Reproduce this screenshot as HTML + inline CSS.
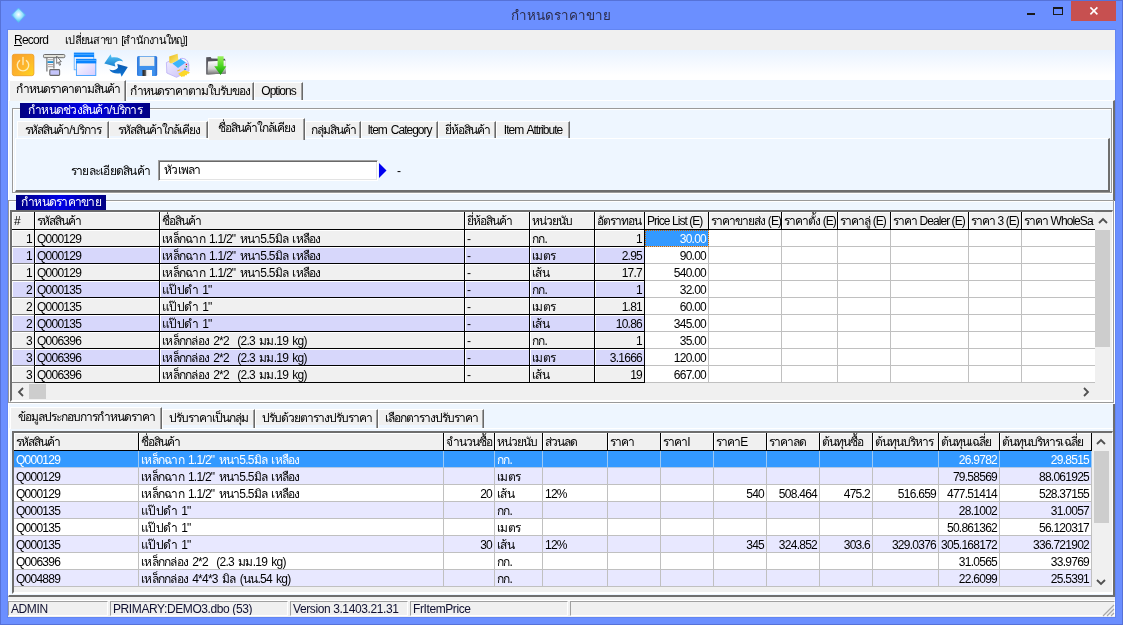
<!DOCTYPE html><html lang="th"><head><meta charset="utf-8"><title>กำหนดราคาขาย</title>
<style>
*{box-sizing:border-box;margin:0;padding:0}
html,body{width:1123px;height:625px;overflow:hidden}
body{position:relative;background:#6b8fff;font-family:"Liberation Sans",sans-serif;font-size:12px;color:#000;letter-spacing:-0.75px;word-spacing:1.6px}
div,span{position:absolute;white-space:pre;overflow:hidden}
.t{line-height:14px;height:15px}
.edge{left:0;top:0;width:1123px;height:625px;border:1px solid #5672d8;overflow:visible}
.title{left:361px;top:5px;width:400px;height:22px;text-align:center;font-size:13.4px;line-height:21px;color:#2c2c4c;letter-spacing:0}
.client{left:7px;top:29px;width:1109px;height:589px;background:#eef6ff;border:1px solid #6285f2}
.menu{left:8px;top:30px;width:1107px;height:20px;background:#f0f0f0;font-size:12px}
.menu span{top:2px;height:17px;line-height:16px}
.tool{left:8px;top:50px;width:1107px;height:30px;background:linear-gradient(#eaf3ff,#ffffff 85%)}
.tab{background:linear-gradient(#f0f0f0,#f0f0f0) no-repeat 0 0/100% 14px;border-right:1px solid #696969;box-shadow:inset -1px 0 0 #a0a0a0;border-left:1px solid #fff;border-top:1px solid #fff;text-align:center;line-height:16px;letter-spacing:-1px}
.tab.on{background:#f0f0f0;z-index:3}

.navy{background:linear-gradient(90deg,#000082 0%,#0000e6 50%,#000082 100%);color:#fff;text-align:center;line-height:14px;height:15px;z-index:4}
.hd{letter-spacing:-0.95px;word-spacing:0;background:#f0f0f0;border-right:1px solid #000;border-bottom:1px solid #000;height:18px;line-height:18px;padding-left:2px;box-shadow:inset 1px 1px 0 #fff}
.fx{border-right:1px solid #000;border-bottom:1px solid #000;height:17px;line-height:19px;padding-left:2px;box-shadow:inset 1px 1px 0 #fff}
.c{border-right:1px solid #c0c0c0;border-bottom:1px solid #c0c0c0;height:17px;line-height:19px;padding-left:2px;background:#fff}
.r{text-align:right;padding-right:2px;padding-left:0}
.sb{background:#f0f0f0}
.thumb{background:#cdcdcd}
.st{top:601px;height:15px;border-left:1px solid #a0a0a0;border-top:1px solid #a0a0a0;border-right:1px solid #fff;border-bottom:1px solid #fff;font-size:12px;line-height:13px;padding-top:1px;padding-left:2px;letter-spacing:-0.4px;word-spacing:0;color:#101030}
i{font-style:normal;display:inline-block;overflow:hidden;vertical-align:top;white-space:pre;height:100%}
</style></head>
<body>
<div id="wrap" style="left:0;top:0;width:1123px;height:625px;will-change:transform;overflow:visible">
<div class="edge"></div>
<svg style="position:absolute;left:10px;top:7px" width="17" height="17" viewBox="0 0 17 17"><defs><radialGradient id="dg" cx="50%" cy="45%" r="55%"><stop offset="0" stop-color="#ffffff"></stop><stop offset="0.5" stop-color="#9fe6ff"></stop><stop offset="1" stop-color="#3fb4f0"></stop></radialGradient></defs><path d="M8.5 1 L15.5 8 L8.5 15.5 L1.5 8 Z" fill="url(#dg)" stroke="#58b8f0" stroke-width="0.8"></path></svg>
<div class="title"><i style="width: 101px;">กำหนดราคาขาย</i></div>
<div style="left:1027px;top:13px;width:8px;height:2px;background:#1a1a1a"></div>
<div style="left:1053px;top:7px;width:10px;height:8px;border:1px solid #1a1a1a;border-top-width:2px"></div>
<div style="left:1071px;top:1px;width:45px;height:20px;background:#c75050"></div>
<svg style="position:absolute;left:1089px;top:6px;z-index:5" width="10" height="10" viewBox="0 0 10 10"><path d="M1.4 1.4 L8.4 8.4 M8.4 1.4 L1.4 8.4" stroke="#fff" stroke-width="1.6" fill="none"></path></svg>
<div class="client"></div>
<div class="menu"><span style="left:6px;width:40px"><u>R</u>ecord</span><span style="left:57px;width:140px;font-size:11px"><i style="width: 124px;">เปลี่ยนสาขา [สำนักงานใหญ่]</i></span></div>
<div class="tool"></div>
<svg style="position:absolute;left:8px;top:50px;z-index:6" width="230" height="30" viewBox="8 50 230 30">
<defs>
<linearGradient id="gPow" x1="0" y1="0" x2="1" y2="1"><stop offset="0" stop-color="#f8a02c"></stop><stop offset="0.55" stop-color="#fdb52c"></stop><stop offset="1" stop-color="#ffd81c"></stop></linearGradient>
<linearGradient id="gWin" x1="0" y1="0" x2="1" y2="1"><stop offset="0" stop-color="#ffffff"></stop><stop offset="1" stop-color="#d6ccff"></stop></linearGradient>
<linearGradient id="gArA" x1="0" y1="0" x2="0" y2="1"><stop offset="0" stop-color="#58c8f8"></stop><stop offset="1" stop-color="#1880d0"></stop></linearGradient>
<linearGradient id="gArB" x1="0" y1="0" x2="0" y2="1"><stop offset="0" stop-color="#0858b0"></stop><stop offset="1" stop-color="#1078d8"></stop></linearGradient>
<linearGradient id="gSav" x1="0" y1="0" x2="1" y2="0"><stop offset="0" stop-color="#2f78dc"></stop><stop offset="0.15" stop-color="#3f92ee"></stop><stop offset="0.85" stop-color="#3f92ee"></stop><stop offset="1" stop-color="#2a6cd0"></stop></linearGradient>
<linearGradient id="gSh" x1="0" y1="0" x2="1" y2="0"><stop offset="0" stop-color="#202020"></stop><stop offset="0.3" stop-color="#505050"></stop><stop offset="0.45" stop-color="#f4f4f4"></stop><stop offset="1" stop-color="#ffffff"></stop></linearGradient>
<linearGradient id="gFol" x1="0" y1="0" x2="0" y2="1"><stop offset="0" stop-color="#ffffff"></stop><stop offset="0.6" stop-color="#d0d0d0"></stop><stop offset="1" stop-color="#707070"></stop></linearGradient>
<linearGradient id="gGrn" x1="0" y1="0" x2="0" y2="1"><stop offset="0" stop-color="#9cf060"></stop><stop offset="0.5" stop-color="#4cd820"></stop><stop offset="1" stop-color="#189810"></stop></linearGradient>
<linearGradient id="gYel" x1="0" y1="0" x2="1" y2="1"><stop offset="0" stop-color="#e8b820"></stop><stop offset="1" stop-color="#fff078"></stop></linearGradient>
<linearGradient id="gPrn" x1="0" y1="0" x2="1" y2="1"><stop offset="0" stop-color="#f0ecff"></stop><stop offset="1" stop-color="#c8c0f8"></stop></linearGradient>
</defs>
<!-- 1 power -->
<rect x="12.3" y="54.3" width="21.6" height="21.4" rx="2.2" fill="url(#gPow)" stroke="#ee9a20" stroke-width="0.8"></rect>
<path d="M19.6 60.6 A5.7 5.7 0 1 0 26.4 60.6" fill="none" stroke="#fff3c4" stroke-width="1.4" stroke-linecap="round" opacity="0.9"></path>
<path d="M23 57.4 V64.6" stroke="#fff3c4" stroke-width="1.4" stroke-linecap="round" opacity="0.9"></path>
<!-- 2 customize toolbar -->
<rect x="43.5" y="54.5" width="21.3" height="3.2" rx="1" fill="#e4e4dc" stroke="#6c6c6c" stroke-width="1"></rect>
<rect x="46.9" y="58" width="7" height="13" fill="#fbfbfb"></rect>
<path d="M46.9 57.8 V71.6 M53.9 57.8 V68.5" stroke="#686868" stroke-width="1.1" fill="none"></path>
<path d="M48 59.6 H53" stroke="#b8b8b8" stroke-width="1.4"></path>
<path d="M47.5 62.1 H53.3" stroke="#1f8fd0" stroke-width="1.9"></path>
<path d="M48 64.6 H53" stroke="#b09090" stroke-width="1"></path>
<path d="M48 66.7 H53" stroke="#a0a0a0" stroke-width="1"></path>
<rect x="49.8" y="69.6" width="9.8" height="5.8" rx="0.8" fill="#c4c4fa" stroke="#686868" stroke-width="1.1"></rect>
<path d="M56.7 56.2 V63.6 L58.3 62.2 L59.5 65.3 L60.6 64.8 L59.4 61.8 L61.3 61.6 Z" fill="#fff" stroke="#404040" stroke-width="0.7"></path>
<!-- 3 windows -->
<rect x="74.2" y="53" width="19.6" height="16.8" fill="#f2f4ff" stroke="#55aaff" stroke-width="0.8"></rect>
<rect x="74" y="52.8" width="20" height="4.3" fill="#0a84ff"></rect>
<path d="M74 54.4 H94" stroke="#58b0ff" stroke-width="0.8"></path>
<rect x="76.4" y="59.2" width="19.4" height="16.3" fill="url(#gWin)" stroke="#3fa0ff" stroke-width="0.9"></rect>
<rect x="76" y="59" width="20.2" height="4.4" fill="#0a84ff"></rect>
<path d="M76 60.5 H96.2" stroke="#58b0ff" stroke-width="0.8"></path>
<!-- 4 refresh -->
<path d="M104.3 63.4 L110.6 54.2 L111.6 57.6 C117 56.6 121.5 58.4 123.2 61.4 C119.5 59.8 116.5 61 114.6 63.4 L115.4 66.6 Z" fill="url(#gArA)"></path>
<path d="M127.8 66.9 L121.6 76.8 L120.4 73.2 C115.5 74.2 111 72.6 109.3 69.5 C113 71 116.3 70 118 67.4 L117.3 64 Z" fill="url(#gArB)"></path>
<!-- 5 save -->
<rect x="137" y="56" width="20.2" height="20" rx="1.6" fill="url(#gSav)"></rect>
<rect x="140" y="57" width="14" height="8.7" fill="#eeeeee" stroke="#f6f2e8" stroke-width="0.6"></rect>
<rect x="142.5" y="70" width="9.5" height="6" fill="url(#gSh)"></rect>
<!-- 6 printer -->
<path d="M166.4 62.5 L175 58.6 L188.6 64 L189 71 L176.5 77.3 L166.8 73 Z" fill="url(#gPrn)" stroke="#b4a8f4" stroke-width="0.7"></path>
<path d="M169.2 56.4 L177.6 53.8 L178.4 60.4 L171 63.6 L169.3 62.4 Z" fill="url(#gYel)"></path>
<path d="M172.4 63.4 L180.6 58.8 L185.8 62.6 L178 67.9 Z" fill="#3cb4fc"></path>
<path d="M180 58.6 C185 57.4 188.6 60.6 188.8 66" fill="none" stroke="#b8acf8" stroke-width="0.9"></path>
<rect x="185.8" y="63.9" width="1.2" height="1.2" fill="#f01818"></rect>
<rect x="185.8" y="66" width="1.2" height="1.2" fill="#28b028"></rect>
<rect x="184.2" y="68.6" width="2" height="1.4" fill="#1c88f0"></rect>
<path d="M177.2 70.4 L180.2 69.2 L180.4 70.2 L177.6 71.4 Z" fill="#f0c020"></path>
<path d="M178.2 73.8 L184.5 70 L190 72.4 L188.6 73.8 L187.6 73.4 L186.4 75.4 L185.4 75 L184.2 76.8 L183 76.2 L181.6 77 Z" fill="#fcd828"></path>
<!-- 7 folder + arrow -->
<path d="M206.2 57.2 L210.6 57 L211.6 58.6 L224.8 58.8 L225.6 60.4 V73.6 L206.2 74.6 Z" fill="#54545c"></path>
<path d="M208 61.4 L225.8 60.6 L226 73.4 L207.4 74.4 Z" fill="url(#gFol)"></path>
<path d="M217.6 56.2 H223.6 V66.2 H226.3 L220.6 75 L214.2 66.2 H217.6 Z" fill="url(#gGrn)"></path>
</svg>

<div style="left:8px;top:100px;width:1107px;height:497px;border-top:1px solid #fff;border-left:1px solid #fff;border-right:2px solid #6e6e6e;border-bottom:2px solid #6e6e6e"></div>
<div class="tab on" style="left:9px;top:80px;width:117px;height:21px;line-height:17px"><i style="width: 105px;">กำหนดราคาตามสินค้า</i></div>
<div class="tab" style="left:126px;top:82px;width:128px;height:18px;line-height:16px"><i style="width: 121px;">กำหนดราคาตามใบรับของ</i></div>
<div class="tab" style="left:254px;top:82px;width:49px;height:18px;line-height:16px">Options</div>
<div style="left:12px;top:108px;width:1100px;height:85px;border:1px solid #9a9a9a;box-shadow:inset 1px 1px 0 #fff, 1px 1px 0 #fff"></div>
<div class="navy" style="left:20px;top:103px;width:130px"><i style="width: 115px;">กำหนดช่วงสินค้า/บริการ</i></div>
<div style="left:15px;top:138px;width:1095px;height:54px;border-top:1px solid #fff;border-left:1px solid #fff;border-right:2px solid #6e6e6e;border-bottom:2px solid #6e6e6e"></div>
<div class="tab" style="left:17px;top:121px;width:92px;height:17px;line-height:16px"><i style="width: 77px;">รหัสสินค้า/บริการ</i></div>
<div class="tab" style="left:109px;top:121px;width:99px;height:17px;line-height:16px"><i style="width: 83px;">รหัสสินค้าใกล้เคียง</i></div>
<div class="tab on" style="left:208px;top:118px;width:97px;height:22px;line-height:18px"><i style="width: 78px;">ชื่อสินค้าใกล้เคียง</i></div>
<div class="tab" style="left:305px;top:121px;width:56px;height:17px;line-height:16px"><i style="width: 46px;">กลุ่มสินค้า</i></div>
<div class="tab" style="left:361px;top:121px;width:77px;height:17px;line-height:16px">Item Category</div>
<div class="tab" style="left:438px;top:121px;width:58px;height:17px;line-height:16px"><i style="width: 46px;">ยี่ห้อสินค้า</i></div>
<div class="tab" style="left:496px;top:121px;width:74px;height:17px;line-height:16px">Item Attribute</div>
<div class="t" style="left:60px;top:164px;width:90px;text-align:right"><i style="width: 81px;">รายละเอียดสินค้า</i></div>
<div style="left:158px;top:160px;width:220px;height:21px;background:#fff;border:1px solid;border-color:#a0a0a0 #fff #fff #a0a0a0;box-shadow:inset 1px 1px 0 #696969,inset -1px -1px 0 #e3e3e3;line-height:19px;padding-left:5px"><i style="width: 38px;">หัวเพลา</i></div>
<svg style="position:absolute;left:379px;top:163px" width="8" height="15" viewBox="0 0 8 15"><path d="M0 0 L7.5 7.5 L0 15 Z" fill="#0000f0"></path></svg>
<div class="t" style="left:397px;top:164px;width:8px">-</div>
<div style="left:9px;top:201px;width:1106px;height:203px;border:1px solid #fff"></div>
<div style="left:8px;top:200px;width:1106px;height:203px;border:1px solid #9a9a9a"></div>
<div class="navy" style="left:16px;top:195px;width:90px"><i style="width: 81px;">กำหนดราคาขาย</i></div>
<div style="left:10px;top:210px;width:1103px;height:192px;background:#f0f0f0;border-top:2px solid #6e6e6e;border-left:2px solid #6e6e6e;border-right:1px solid #fff;border-bottom:2px solid #fff"></div>
<div class="hd" style="left:12px;top:212px;width:23px">#</div>
<div class="hd" style="left:35px;top:212px;width:125px"><i style="width: 46px;">รหัสสินค้า</i></div>
<div class="hd" style="left:160px;top:212px;width:305px"><i style="width: 41px;">ชื่อสินค้า</i></div>
<div class="hd" style="left:465px;top:212px;width:65px"><i style="width: 47px;">ยี่ห้อสินค้า</i></div>
<div class="hd" style="left:530px;top:212px;width:65px"><i style="width: 42px;">หน่วยนับ</i></div>
<div class="hd" style="left:595px;top:212px;width:50px"><i style="width: 46px;">อัตราทอน</i></div>
<div class="hd" style="left:645px;top:212px;width:64px">Price List (E)</div>
<div class="hd" style="left:709px;top:212px;width:73px"><i style="width: 71px;">ราคาขายส่ง (E)</i></div>
<div class="hd" style="left:782px;top:212px;width:56px"><i style="width: 53px;">ราคาตั้ง (E)</i></div>
<div class="hd" style="left:838px;top:212px;width:53px"><i style="width: 47px;">ราคาลู่ (E)</i></div>
<div class="hd" style="left:891px;top:212px;width:78px"><i style="width: 73px;">ราคา Dealer (E)</i></div>
<div class="hd" style="left:969px;top:212px;width:53px"><i style="width: 49px;">ราคา 3 (E)</i></div>
<div class="hd" style="left:1022px;top:212px;width:73px;border-right:none"><i style="width: 70px;">ราคา WholeSa</i></div>
<div class="fx r" style="left:12px;top:230px;width:23px;background:#f0f0f0;border-bottom-color:#808080">1</div>
<div class="fx" style="left:35px;top:230px;width:125px;background:#f0f0f0">Q000129</div>
<div class="fx" style="left:160px;top:230px;width:305px;background:#f0f0f0"><i style="width: 160px;">เหล็กฉาก 1.1/2" หนา5.5มิล เหลือง</i></div>
<div class="fx" style="left:465px;top:230px;width:65px;background:#f0f0f0">-</div>
<div class="fx" style="left:530px;top:230px;width:65px;background:#f0f0f0"><i style="width: 17px;">กก.</i></div>
<div class="fx r" style="left:595px;top:230px;width:50px;background:#f0f0f0">1</div>
<div class="c r" style="left:645px;top:230px;width:64px;background:#3399ff;color:#fff;outline:1px dotted #c86400;outline-offset:-1px">30.00</div>
<div class="c r" style="left:709px;top:230px;width:73px"></div>
<div class="c r" style="left:782px;top:230px;width:56px"></div>
<div class="c r" style="left:838px;top:230px;width:53px"></div>
<div class="c r" style="left:891px;top:230px;width:78px"></div>
<div class="c r" style="left:969px;top:230px;width:53px"></div>
<div class="c r" style="left:1022px;top:230px;width:73px;border-right:none"></div>
<div class="fx r" style="left:12px;top:247px;width:23px;background:#d7d7fb;border-bottom-color:#808080">1</div>
<div class="fx" style="left:35px;top:247px;width:125px;background:#d7d7fb">Q000129</div>
<div class="fx" style="left:160px;top:247px;width:305px;background:#d7d7fb"><i style="width: 160px;">เหล็กฉาก 1.1/2" หนา5.5มิล เหลือง</i></div>
<div class="fx" style="left:465px;top:247px;width:65px;background:#d7d7fb">-</div>
<div class="fx" style="left:530px;top:247px;width:65px;background:#d7d7fb"><i style="width: 24px;">เมตร</i></div>
<div class="fx r" style="left:595px;top:247px;width:50px;background:#d7d7fb">2.95</div>
<div class="c r" style="left:645px;top:247px;width:64px">90.00</div>
<div class="c r" style="left:709px;top:247px;width:73px"></div>
<div class="c r" style="left:782px;top:247px;width:56px"></div>
<div class="c r" style="left:838px;top:247px;width:53px"></div>
<div class="c r" style="left:891px;top:247px;width:78px"></div>
<div class="c r" style="left:969px;top:247px;width:53px"></div>
<div class="c r" style="left:1022px;top:247px;width:73px;border-right:none"></div>
<div class="fx r" style="left:12px;top:264px;width:23px;background:#f0f0f0;border-bottom-color:#808080">1</div>
<div class="fx" style="left:35px;top:264px;width:125px;background:#f0f0f0">Q000129</div>
<div class="fx" style="left:160px;top:264px;width:305px;background:#f0f0f0"><i style="width: 160px;">เหล็กฉาก 1.1/2" หนา5.5มิล เหลือง</i></div>
<div class="fx" style="left:465px;top:264px;width:65px;background:#f0f0f0">-</div>
<div class="fx" style="left:530px;top:264px;width:65px;background:#f0f0f0"><i style="width: 18px;">เส้น</i></div>
<div class="fx r" style="left:595px;top:264px;width:50px;background:#f0f0f0">17.7</div>
<div class="c r" style="left:645px;top:264px;width:64px">540.00</div>
<div class="c r" style="left:709px;top:264px;width:73px"></div>
<div class="c r" style="left:782px;top:264px;width:56px"></div>
<div class="c r" style="left:838px;top:264px;width:53px"></div>
<div class="c r" style="left:891px;top:264px;width:78px"></div>
<div class="c r" style="left:969px;top:264px;width:53px"></div>
<div class="c r" style="left:1022px;top:264px;width:73px;border-right:none"></div>
<div class="fx r" style="left:12px;top:281px;width:23px;background:#d7d7fb;border-bottom-color:#808080">2</div>
<div class="fx" style="left:35px;top:281px;width:125px;background:#d7d7fb">Q000135</div>
<div class="fx" style="left:160px;top:281px;width:305px;background:#d7d7fb"><i style="width: 51px;">แป๊ปดำ 1"</i></div>
<div class="fx" style="left:465px;top:281px;width:65px;background:#d7d7fb">-</div>
<div class="fx" style="left:530px;top:281px;width:65px;background:#d7d7fb"><i style="width: 17px;">กก.</i></div>
<div class="fx r" style="left:595px;top:281px;width:50px;background:#d7d7fb">1</div>
<div class="c r" style="left:645px;top:281px;width:64px">32.00</div>
<div class="c r" style="left:709px;top:281px;width:73px"></div>
<div class="c r" style="left:782px;top:281px;width:56px"></div>
<div class="c r" style="left:838px;top:281px;width:53px"></div>
<div class="c r" style="left:891px;top:281px;width:78px"></div>
<div class="c r" style="left:969px;top:281px;width:53px"></div>
<div class="c r" style="left:1022px;top:281px;width:73px;border-right:none"></div>
<div class="fx r" style="left:12px;top:298px;width:23px;background:#f0f0f0;border-bottom-color:#808080">2</div>
<div class="fx" style="left:35px;top:298px;width:125px;background:#f0f0f0">Q000135</div>
<div class="fx" style="left:160px;top:298px;width:305px;background:#f0f0f0"><i style="width: 51px;">แป๊ปดำ 1"</i></div>
<div class="fx" style="left:465px;top:298px;width:65px;background:#f0f0f0">-</div>
<div class="fx" style="left:530px;top:298px;width:65px;background:#f0f0f0"><i style="width: 24px;">เมตร</i></div>
<div class="fx r" style="left:595px;top:298px;width:50px;background:#f0f0f0">1.81</div>
<div class="c r" style="left:645px;top:298px;width:64px">60.00</div>
<div class="c r" style="left:709px;top:298px;width:73px"></div>
<div class="c r" style="left:782px;top:298px;width:56px"></div>
<div class="c r" style="left:838px;top:298px;width:53px"></div>
<div class="c r" style="left:891px;top:298px;width:78px"></div>
<div class="c r" style="left:969px;top:298px;width:53px"></div>
<div class="c r" style="left:1022px;top:298px;width:73px;border-right:none"></div>
<div class="fx r" style="left:12px;top:315px;width:23px;background:#d7d7fb;border-bottom-color:#808080">2</div>
<div class="fx" style="left:35px;top:315px;width:125px;background:#d7d7fb">Q000135</div>
<div class="fx" style="left:160px;top:315px;width:305px;background:#d7d7fb"><i style="width: 51px;">แป๊ปดำ 1"</i></div>
<div class="fx" style="left:465px;top:315px;width:65px;background:#d7d7fb">-</div>
<div class="fx" style="left:530px;top:315px;width:65px;background:#d7d7fb"><i style="width: 18px;">เส้น</i></div>
<div class="fx r" style="left:595px;top:315px;width:50px;background:#d7d7fb">10.86</div>
<div class="c r" style="left:645px;top:315px;width:64px">345.00</div>
<div class="c r" style="left:709px;top:315px;width:73px"></div>
<div class="c r" style="left:782px;top:315px;width:56px"></div>
<div class="c r" style="left:838px;top:315px;width:53px"></div>
<div class="c r" style="left:891px;top:315px;width:78px"></div>
<div class="c r" style="left:969px;top:315px;width:53px"></div>
<div class="c r" style="left:1022px;top:315px;width:73px;border-right:none"></div>
<div class="fx r" style="left:12px;top:332px;width:23px;background:#f0f0f0;border-bottom-color:#808080">3</div>
<div class="fx" style="left:35px;top:332px;width:125px;background:#f0f0f0">Q006396</div>
<div class="fx" style="left:160px;top:332px;width:305px;background:#f0f0f0"><i style="width: 146px;">เหล็กกล่อง 2*2  (2.3 มม.19 kg)</i></div>
<div class="fx" style="left:465px;top:332px;width:65px;background:#f0f0f0">-</div>
<div class="fx" style="left:530px;top:332px;width:65px;background:#f0f0f0"><i style="width: 17px;">กก.</i></div>
<div class="fx r" style="left:595px;top:332px;width:50px;background:#f0f0f0">1</div>
<div class="c r" style="left:645px;top:332px;width:64px">35.00</div>
<div class="c r" style="left:709px;top:332px;width:73px"></div>
<div class="c r" style="left:782px;top:332px;width:56px"></div>
<div class="c r" style="left:838px;top:332px;width:53px"></div>
<div class="c r" style="left:891px;top:332px;width:78px"></div>
<div class="c r" style="left:969px;top:332px;width:53px"></div>
<div class="c r" style="left:1022px;top:332px;width:73px;border-right:none"></div>
<div class="fx r" style="left:12px;top:349px;width:23px;background:#d7d7fb;border-bottom-color:#808080">3</div>
<div class="fx" style="left:35px;top:349px;width:125px;background:#d7d7fb">Q006396</div>
<div class="fx" style="left:160px;top:349px;width:305px;background:#d7d7fb"><i style="width: 146px;">เหล็กกล่อง 2*2  (2.3 มม.19 kg)</i></div>
<div class="fx" style="left:465px;top:349px;width:65px;background:#d7d7fb">-</div>
<div class="fx" style="left:530px;top:349px;width:65px;background:#d7d7fb"><i style="width: 24px;">เมตร</i></div>
<div class="fx r" style="left:595px;top:349px;width:50px;background:#d7d7fb">3.1666</div>
<div class="c r" style="left:645px;top:349px;width:64px">120.00</div>
<div class="c r" style="left:709px;top:349px;width:73px"></div>
<div class="c r" style="left:782px;top:349px;width:56px"></div>
<div class="c r" style="left:838px;top:349px;width:53px"></div>
<div class="c r" style="left:891px;top:349px;width:78px"></div>
<div class="c r" style="left:969px;top:349px;width:53px"></div>
<div class="c r" style="left:1022px;top:349px;width:73px;border-right:none"></div>
<div class="fx r" style="left:12px;top:366px;width:23px;background:#f0f0f0;border-bottom-color:#808080">3</div>
<div class="fx" style="left:35px;top:366px;width:125px;background:#f0f0f0">Q006396</div>
<div class="fx" style="left:160px;top:366px;width:305px;background:#f0f0f0"><i style="width: 146px;">เหล็กกล่อง 2*2  (2.3 มม.19 kg)</i></div>
<div class="fx" style="left:465px;top:366px;width:65px;background:#f0f0f0">-</div>
<div class="fx" style="left:530px;top:366px;width:65px;background:#f0f0f0"><i style="width: 18px;">เส้น</i></div>
<div class="fx r" style="left:595px;top:366px;width:50px;background:#f0f0f0">19</div>
<div class="c r" style="left:645px;top:366px;width:64px">667.00</div>
<div class="c r" style="left:709px;top:366px;width:73px"></div>
<div class="c r" style="left:782px;top:366px;width:56px"></div>
<div class="c r" style="left:838px;top:366px;width:53px"></div>
<div class="c r" style="left:891px;top:366px;width:78px"></div>
<div class="c r" style="left:969px;top:366px;width:53px"></div>
<div class="c r" style="left:1022px;top:366px;width:73px;border-right:none"></div>
<div class="sb" style="left:1095px;top:212px;width:17px;height:171px"></div>
<div class="thumb" style="left:1095px;top:230px;width:15px;height:117px"></div>
<svg style="position:absolute;left:1098px;top:217px" width="10" height="7" viewBox="0 0 10 7"><path d="M1 6 L5 2 L9 6" stroke="#505050" stroke-width="1.8" fill="none"></path></svg>
<div class="sb" style="left:12px;top:383px;width:1100px;height:17px"></div>
<div class="thumb" style="left:29px;top:384px;width:17px;height:15px"></div>
<svg style="position:absolute;left:17px;top:387px" width="7" height="10" viewBox="0 0 7 10"><path d="M6 1 L2 5 L6 9" stroke="#505050" stroke-width="1.8" fill="none"></path></svg>
<svg style="position:absolute;left:1083px;top:387px" width="7" height="10" viewBox="0 0 7 10"><path d="M1 1 L5 5 L1 9" stroke="#505050" stroke-width="1.8" fill="none"></path></svg>
<div style="left:9px;top:428px;width:1104px;height:167px;border-top:1px solid #fff;border-left:1px solid #fff"></div>
<div class="tab on" style="left:10px;top:407px;width:152px;height:22px;line-height:19px"><i style="width: 138px;">ข้อมูลประกอบการกำหนดราคา</i></div>
<div class="tab" style="left:162px;top:409px;width:93px;height:19px;line-height:17px;background-size:100% 15px"><i style="width: 80px;">ปรับราคาเป็นกลุ่ม</i></div>
<div class="tab" style="left:255px;top:409px;width:123px;height:19px;line-height:17px;background-size:100% 15px"><i style="width: 111px;">ปรับด้วยตารางปรับราคา</i></div>
<div class="tab" style="left:378px;top:409px;width:106px;height:19px;line-height:17px;background-size:100% 15px"><i style="width: 94px;">เลือกตารางปรับราคา</i></div>
<div style="left:12px;top:431px;width:1101px;height:163px;background:#f0f0f0;border-top:2px solid #6e6e6e;border-left:2px solid #6e6e6e;border-right:1px solid #fff;border-bottom:2px solid #fff"></div>
<div class="hd" style="left:14px;top:433px;width:125px"><i style="width: 46px;">รหัสสินค้า</i></div>
<div class="hd" style="left:139px;top:433px;width:305px"><i style="width: 41px;">ชื่อสินค้า</i></div>
<div class="hd" style="left:444px;top:433px;width:51px"><i style="width: 48px;">จำนวนซื้อ</i></div>
<div class="hd" style="left:495px;top:433px;width:48px"><i style="width: 42px;">หน่วยนับ</i></div>
<div class="hd" style="left:543px;top:433px;width:65px"><i style="width: 34px;">ส่วนลด</i></div>
<div class="hd" style="left:608px;top:433px;width:53px"><i style="width: 26px;">ราคา</i></div>
<div class="hd" style="left:661px;top:433px;width:53px"><i style="width: 28px;">ราคาI</i></div>
<div class="hd" style="left:714px;top:433px;width:53px"><i style="width: 33px;">ราคาE</i></div>
<div class="hd" style="left:767px;top:433px;width:53px"><i style="width: 39px;">ราคาลด</i></div>
<div class="hd" style="left:820px;top:433px;width:53px"><i style="width: 43px;">ต้นทุนซื้อ</i></div>
<div class="hd" style="left:873px;top:433px;width:66px"><i style="width: 60px;">ต้นทุนบริหาร</i></div>
<div class="hd" style="left:939px;top:433px;width:61px"><i style="width: 52px;">ต้นทุนเฉลี่ย</i></div>
<div class="hd" style="left:1000px;top:433px;width:92px"><i style="width: 82px;">ต้นทุนบริหารเฉลี่ย</i></div>
<div class="c" style="left:14px;top:451px;width:125px;background:#3399ff;color:#fff;border-right-color:#9cc8f4;border-bottom-color:#b4c8e4">Q000129</div>
<div class="c" style="left:139px;top:451px;width:305px;background:#3399ff;color:#fff;border-right-color:#9cc8f4;border-bottom-color:#b4c8e4"><i style="width: 160px;">เหล็กฉาก 1.1/2" หนา5.5มิล เหลือง</i></div>
<div class="c r" style="left:444px;top:451px;width:51px;background:#3399ff;color:#fff;border-right-color:#9cc8f4;border-bottom-color:#b4c8e4"></div>
<div class="c" style="left:495px;top:451px;width:48px;background:#3399ff;color:#fff;border-right-color:#9cc8f4;border-bottom-color:#b4c8e4"><i style="width: 17px;">กก.</i></div>
<div class="c" style="left:543px;top:451px;width:65px;background:#3399ff;color:#fff;border-right-color:#9cc8f4;border-bottom-color:#b4c8e4"></div>
<div class="c r" style="left:608px;top:451px;width:53px;background:#3399ff;color:#fff;border-right-color:#9cc8f4;border-bottom-color:#b4c8e4"></div>
<div class="c r" style="left:661px;top:451px;width:53px;background:#3399ff;color:#fff;border-right-color:#9cc8f4;border-bottom-color:#b4c8e4"></div>
<div class="c r" style="left:714px;top:451px;width:53px;background:#3399ff;color:#fff;border-right-color:#9cc8f4;border-bottom-color:#b4c8e4"></div>
<div class="c r" style="left:767px;top:451px;width:53px;background:#3399ff;color:#fff;border-right-color:#9cc8f4;border-bottom-color:#b4c8e4"></div>
<div class="c r" style="left:820px;top:451px;width:53px;background:#3399ff;color:#fff;border-right-color:#9cc8f4;border-bottom-color:#b4c8e4"></div>
<div class="c r" style="left:873px;top:451px;width:66px;background:#3399ff;color:#fff;border-right-color:#9cc8f4;border-bottom-color:#b4c8e4"></div>
<div class="c r" style="left:939px;top:451px;width:61px;background:#3399ff;color:#fff;border-right-color:#9cc8f4;border-bottom-color:#b4c8e4">26.9782</div>
<div class="c r" style="left:1000px;top:451px;width:92px;background:#3399ff;color:#fff;border-right-color:#9cc8f4;border-bottom-color:#b4c8e4">29.8515</div>
<div class="c" style="left:14px;top:468px;width:125px;background:#e8e8ff;color:#000">Q000129</div>
<div class="c" style="left:139px;top:468px;width:305px;background:#e8e8ff;color:#000"><i style="width: 160px;">เหล็กฉาก 1.1/2" หนา5.5มิล เหลือง</i></div>
<div class="c r" style="left:444px;top:468px;width:51px;background:#e8e8ff;color:#000"></div>
<div class="c" style="left:495px;top:468px;width:48px;background:#e8e8ff;color:#000"><i style="width: 24px;">เมตร</i></div>
<div class="c" style="left:543px;top:468px;width:65px;background:#e8e8ff;color:#000"></div>
<div class="c r" style="left:608px;top:468px;width:53px;background:#e8e8ff;color:#000"></div>
<div class="c r" style="left:661px;top:468px;width:53px;background:#e8e8ff;color:#000"></div>
<div class="c r" style="left:714px;top:468px;width:53px;background:#e8e8ff;color:#000"></div>
<div class="c r" style="left:767px;top:468px;width:53px;background:#e8e8ff;color:#000"></div>
<div class="c r" style="left:820px;top:468px;width:53px;background:#e8e8ff;color:#000"></div>
<div class="c r" style="left:873px;top:468px;width:66px;background:#e8e8ff;color:#000"></div>
<div class="c r" style="left:939px;top:468px;width:61px;background:#e8e8ff;color:#000">79.58569</div>
<div class="c r" style="left:1000px;top:468px;width:92px;background:#e8e8ff;color:#000">88.061925</div>
<div class="c" style="left:14px;top:485px;width:125px;background:#fff;color:#000">Q000129</div>
<div class="c" style="left:139px;top:485px;width:305px;background:#fff;color:#000"><i style="width: 160px;">เหล็กฉาก 1.1/2" หนา5.5มิล เหลือง</i></div>
<div class="c r" style="left:444px;top:485px;width:51px;background:#fff;color:#000">20</div>
<div class="c" style="left:495px;top:485px;width:48px;background:#fff;color:#000"><i style="width: 18px;">เส้น</i></div>
<div class="c" style="left:543px;top:485px;width:65px;background:#fff;color:#000">12%</div>
<div class="c r" style="left:608px;top:485px;width:53px;background:#fff;color:#000"></div>
<div class="c r" style="left:661px;top:485px;width:53px;background:#fff;color:#000"></div>
<div class="c r" style="left:714px;top:485px;width:53px;background:#fff;color:#000">540</div>
<div class="c r" style="left:767px;top:485px;width:53px;background:#fff;color:#000">508.464</div>
<div class="c r" style="left:820px;top:485px;width:53px;background:#fff;color:#000">475.2</div>
<div class="c r" style="left:873px;top:485px;width:66px;background:#fff;color:#000">516.659</div>
<div class="c r" style="left:939px;top:485px;width:61px;background:#fff;color:#000">477.51414</div>
<div class="c r" style="left:1000px;top:485px;width:92px;background:#fff;color:#000">528.37155</div>
<div class="c" style="left:14px;top:502px;width:125px;background:#e8e8ff;color:#000">Q000135</div>
<div class="c" style="left:139px;top:502px;width:305px;background:#e8e8ff;color:#000"><i style="width: 51px;">แป๊ปดำ 1"</i></div>
<div class="c r" style="left:444px;top:502px;width:51px;background:#e8e8ff;color:#000"></div>
<div class="c" style="left:495px;top:502px;width:48px;background:#e8e8ff;color:#000"><i style="width: 17px;">กก.</i></div>
<div class="c" style="left:543px;top:502px;width:65px;background:#e8e8ff;color:#000"></div>
<div class="c r" style="left:608px;top:502px;width:53px;background:#e8e8ff;color:#000"></div>
<div class="c r" style="left:661px;top:502px;width:53px;background:#e8e8ff;color:#000"></div>
<div class="c r" style="left:714px;top:502px;width:53px;background:#e8e8ff;color:#000"></div>
<div class="c r" style="left:767px;top:502px;width:53px;background:#e8e8ff;color:#000"></div>
<div class="c r" style="left:820px;top:502px;width:53px;background:#e8e8ff;color:#000"></div>
<div class="c r" style="left:873px;top:502px;width:66px;background:#e8e8ff;color:#000"></div>
<div class="c r" style="left:939px;top:502px;width:61px;background:#e8e8ff;color:#000">28.1002</div>
<div class="c r" style="left:1000px;top:502px;width:92px;background:#e8e8ff;color:#000">31.0057</div>
<div class="c" style="left:14px;top:519px;width:125px;background:#fff;color:#000">Q000135</div>
<div class="c" style="left:139px;top:519px;width:305px;background:#fff;color:#000"><i style="width: 51px;">แป๊ปดำ 1"</i></div>
<div class="c r" style="left:444px;top:519px;width:51px;background:#fff;color:#000"></div>
<div class="c" style="left:495px;top:519px;width:48px;background:#fff;color:#000"><i style="width: 24px;">เมตร</i></div>
<div class="c" style="left:543px;top:519px;width:65px;background:#fff;color:#000"></div>
<div class="c r" style="left:608px;top:519px;width:53px;background:#fff;color:#000"></div>
<div class="c r" style="left:661px;top:519px;width:53px;background:#fff;color:#000"></div>
<div class="c r" style="left:714px;top:519px;width:53px;background:#fff;color:#000"></div>
<div class="c r" style="left:767px;top:519px;width:53px;background:#fff;color:#000"></div>
<div class="c r" style="left:820px;top:519px;width:53px;background:#fff;color:#000"></div>
<div class="c r" style="left:873px;top:519px;width:66px;background:#fff;color:#000"></div>
<div class="c r" style="left:939px;top:519px;width:61px;background:#fff;color:#000">50.861362</div>
<div class="c r" style="left:1000px;top:519px;width:92px;background:#fff;color:#000">56.120317</div>
<div class="c" style="left:14px;top:536px;width:125px;background:#e8e8ff;color:#000">Q000135</div>
<div class="c" style="left:139px;top:536px;width:305px;background:#e8e8ff;color:#000"><i style="width: 51px;">แป๊ปดำ 1"</i></div>
<div class="c r" style="left:444px;top:536px;width:51px;background:#e8e8ff;color:#000">30</div>
<div class="c" style="left:495px;top:536px;width:48px;background:#e8e8ff;color:#000"><i style="width: 18px;">เส้น</i></div>
<div class="c" style="left:543px;top:536px;width:65px;background:#e8e8ff;color:#000">12%</div>
<div class="c r" style="left:608px;top:536px;width:53px;background:#e8e8ff;color:#000"></div>
<div class="c r" style="left:661px;top:536px;width:53px;background:#e8e8ff;color:#000"></div>
<div class="c r" style="left:714px;top:536px;width:53px;background:#e8e8ff;color:#000">345</div>
<div class="c r" style="left:767px;top:536px;width:53px;background:#e8e8ff;color:#000">324.852</div>
<div class="c r" style="left:820px;top:536px;width:53px;background:#e8e8ff;color:#000">303.6</div>
<div class="c r" style="left:873px;top:536px;width:66px;background:#e8e8ff;color:#000">329.0376</div>
<div class="c r" style="left:939px;top:536px;width:61px;background:#e8e8ff;color:#000">305.168172</div>
<div class="c r" style="left:1000px;top:536px;width:92px;background:#e8e8ff;color:#000">336.721902</div>
<div class="c" style="left:14px;top:553px;width:125px;background:#fff;color:#000">Q006396</div>
<div class="c" style="left:139px;top:553px;width:305px;background:#fff;color:#000"><i style="width: 146px;">เหล็กกล่อง 2*2  (2.3 มม.19 kg)</i></div>
<div class="c r" style="left:444px;top:553px;width:51px;background:#fff;color:#000"></div>
<div class="c" style="left:495px;top:553px;width:48px;background:#fff;color:#000"><i style="width: 17px;">กก.</i></div>
<div class="c" style="left:543px;top:553px;width:65px;background:#fff;color:#000"></div>
<div class="c r" style="left:608px;top:553px;width:53px;background:#fff;color:#000"></div>
<div class="c r" style="left:661px;top:553px;width:53px;background:#fff;color:#000"></div>
<div class="c r" style="left:714px;top:553px;width:53px;background:#fff;color:#000"></div>
<div class="c r" style="left:767px;top:553px;width:53px;background:#fff;color:#000"></div>
<div class="c r" style="left:820px;top:553px;width:53px;background:#fff;color:#000"></div>
<div class="c r" style="left:873px;top:553px;width:66px;background:#fff;color:#000"></div>
<div class="c r" style="left:939px;top:553px;width:61px;background:#fff;color:#000">31.0565</div>
<div class="c r" style="left:1000px;top:553px;width:92px;background:#fff;color:#000">33.9769</div>
<div class="c" style="left:14px;top:570px;width:125px;background:#e8e8ff;color:#000">Q004889</div>
<div class="c" style="left:139px;top:570px;width:305px;background:#e8e8ff;color:#000"><i style="width: 151px;">เหล็กกล่อง 4*4*3 มิล (นน.54 kg)</i></div>
<div class="c r" style="left:444px;top:570px;width:51px;background:#e8e8ff;color:#000"></div>
<div class="c" style="left:495px;top:570px;width:48px;background:#e8e8ff;color:#000"><i style="width: 17px;">กก.</i></div>
<div class="c" style="left:543px;top:570px;width:65px;background:#e8e8ff;color:#000"></div>
<div class="c r" style="left:608px;top:570px;width:53px;background:#e8e8ff;color:#000"></div>
<div class="c r" style="left:661px;top:570px;width:53px;background:#e8e8ff;color:#000"></div>
<div class="c r" style="left:714px;top:570px;width:53px;background:#e8e8ff;color:#000"></div>
<div class="c r" style="left:767px;top:570px;width:53px;background:#e8e8ff;color:#000"></div>
<div class="c r" style="left:820px;top:570px;width:53px;background:#e8e8ff;color:#000"></div>
<div class="c r" style="left:873px;top:570px;width:66px;background:#e8e8ff;color:#000"></div>
<div class="c r" style="left:939px;top:570px;width:61px;background:#e8e8ff;color:#000">22.6099</div>
<div class="c r" style="left:1000px;top:570px;width:92px;background:#e8e8ff;color:#000">25.5391</div>
<div class="sb" style="left:1093px;top:433px;width:19px;height:158px"></div>
<div class="thumb" style="left:1094px;top:451px;width:15px;height:72px"></div>
<svg style="position:absolute;left:1096px;top:438px" width="10" height="7" viewBox="0 0 10 7"><path d="M1 6 L5 2 L9 6" stroke="#505050" stroke-width="1.8" fill="none"></path></svg>
<svg style="position:absolute;left:1096px;top:579px" width="10" height="7" viewBox="0 0 10 7"><path d="M1 1 L5 5 L9 1" stroke="#505050" stroke-width="1.8" fill="none"></path></svg>
<div style="left:8px;top:597px;width:1107px;height:20px;background:#f0f0f0;border-top:1px solid #f0f0f0"></div>
<div style="left:8px;top:600px;width:1107px;height:1px;background:#fff"></div>
<div class="st" style="left:8px;width:100px">ADMIN</div>
<div class="st" style="left:110px;width:178px">PRIMARY:DEMO3.dbo (53)</div>
<div class="st" style="left:290px;width:118px">Version 3.1403.21.31</div>
<div class="st" style="left:410px;width:158px">FrItemPrice</div>
<div class="st" style="left:570px;width:545px"></div>
<svg style="position:absolute;left:1102px;top:604px" width="13" height="13" viewBox="0 0 13 13"><path d="M12 1 L1 12 M12 5 L5 12 M12 9 L9 12" stroke="#a8a8a8" stroke-width="1.2" fill="none"></path></svg>
</div>
</body></html>
